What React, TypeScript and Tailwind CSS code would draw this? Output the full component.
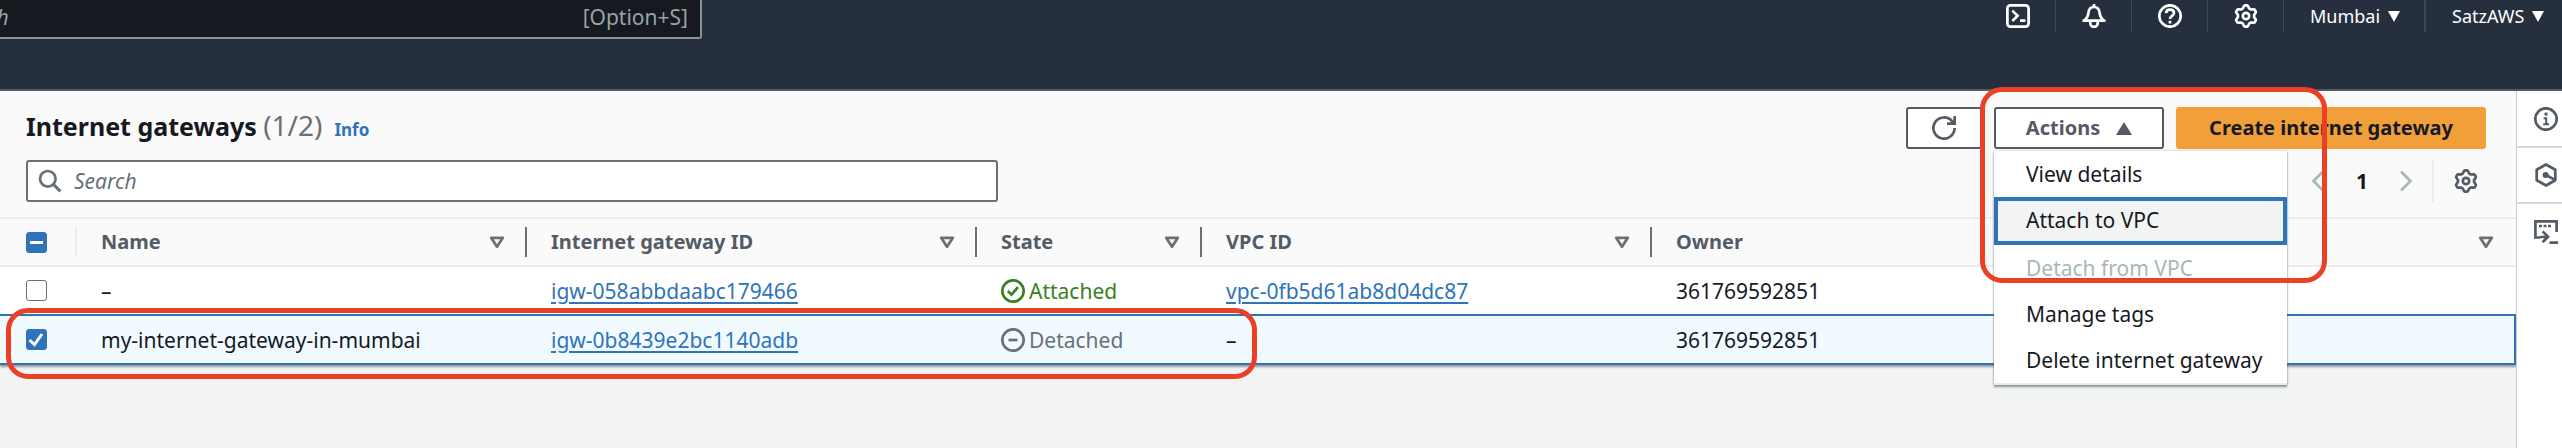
import React, { useState } from 'react';

type IconProps = { className?: string };

function Svg({ className = '', children }: IconProps & { children: React.ReactNode }) {
  return (
    <svg viewBox="0 0 24 24" fill="none" stroke="currentColor" strokeWidth="2.7" className={`block size-6 shrink-0 ${className}`} aria-hidden="true">
      {children}
    </svg>
  );
}

function gearPath(): string {
  const points: string[] = [];
  for (let i = 0; i < 144; i++) {
    const a = (i / 144) * Math.PI * 2;
    const wave = Math.max(-1, Math.min(1, 1.35 * Math.cos(6 * a)));
    const r = 9.4 + 1.3 * wave;
    points.push(`${(12 + r * Math.sin(a)).toFixed(2)} ${(12 - r * Math.cos(a)).toFixed(2)}`);
  }
  return `M${points.join('L')}Z`;
}

const GEAR = gearPath();

const GearIcon = () => (
  <Svg>
    <path d={GEAR} strokeLinejoin="round" />
    <circle cx="12" cy="12" r="3.2" />
  </Svg>
);

const ShellIcon = () => (
  <Svg>
    <rect x="1.4" y="1.4" width="21.2" height="21.2" rx="3" />
    <path d="M6.3 6.6 11.6 11.8 6.3 17M14 16.6h5.4" />
  </Svg>
);

const BellIcon = () => (
  <Svg>
    <path d="M12 0v3M0.5 16.6h23M2.6 16.4C5.4 13.8 6.2 12 6.4 9 6.7 5.4 8.6 3 12 3s5.3 2.4 5.6 6c.2 3 1 4.8 3.8 7.4" />
    <path d="M8.3 17v2.2a3.7 3.7 0 0 0 7.4 0V17" />
  </Svg>
);

const HelpIcon = () => (
  <Svg>
    <circle cx="12" cy="12" r="10.7" />
    <path d="M8 9.2C8.2 6.8 9.8 5.7 12 5.7c2.3 0 4 1.3 4 3.3 0 3-4 2.9-4 6.1M12 16.8v2.6" />
  </Svg>
);

const RefreshIcon = () => (
  <Svg>
    <path d="M22.6 12A10.6 10.6 0 1 1 20 5.1L22 7.6" />
    <path d="M15 7.7h7.7V0" />
  </Svg>
);

const SearchIcon = () => (
  <Svg>
    <circle cx="9.8" cy="9.8" r="7.8" />
    <path d="m15.4 15.4 7 7" strokeWidth="3" />
  </Svg>
);

const InfoIcon = () => (
  <Svg>
    <circle cx="12" cy="12" r="10.7" />
    <path d="M12 5.6v3" strokeWidth="3" />
    <path d="M9.6 11.2h2.6v6M9.2 17.3h5.8" strokeWidth="2" />
  </Svg>
);

const HexIcon = () => (
  <Svg>
    <path d="m12 1.5 9.3 5.2v10.6L12 22.5l-9.3-5.2V6.7Z" strokeLinejoin="round" />
    <circle cx="11.6" cy="12" r="3" fill="currentColor" stroke="none" />
    <path d="m12 12 8.5 4.6" />
  </Svg>
);

const ConsoleIcon = () => (
  <Svg>
    <path d="M6 17.5H1.4V1.4h21.2V12" />
    <path d="M5 6h3M9.5 6h3M14 6h3" />
    <path d="M6 17h7.5M8.6 11.4l5.4 5.4-5.4 5.4M15.5 22.6H24" />
  </Svg>
);

const CheckCircleIcon = () => (
  <Svg>
    <circle cx="12" cy="12" r="10.7" />
    <path d="m6.8 12 3.7 3.6 6.4-7.4" />
  </Svg>
);

const MinusCircleIcon = () => (
  <Svg>
    <circle cx="12" cy="12" r="10.7" />
    <path d="M7.5 12h9" />
  </Svg>
);

const ChevronIcon = ({ className = '' }: IconProps) => (
  <Svg className={className}>
    <path d="m7 2.5 9.5 9.5L7 21.5" />
  </Svg>
);

const FilterIcon = () => (
  <svg viewBox="0 0 16 13" className="block h-[13px] w-4 shrink-0" fill="none" stroke="currentColor" strokeWidth="2.8" aria-hidden="true">
    <path d="M2.2 1.8h11.6L8 10.7Z" strokeLinejoin="round" />
  </svg>
);

const CaretDown = () => (
  <svg viewBox="0 0 12 12" className="block size-3" fill="currentColor" aria-hidden="true">
    <path d="M0 1h12L6 12Z" />
  </svg>
);

function Checkbox({ label, state, onChange }: { label: string; state: 'on' | 'off' | 'mixed'; onChange: () => void }) {
  return (
    <label className="relative block size-[21px]">
      <input
        type="checkbox"
        aria-label={label}
        checked={state === 'on'}
        onChange={onChange}
        className={`block size-[21px] appearance-none rounded-[3px] border ${state === 'off' ? 'border-[#687078] bg-white' : 'border-[#2f73ba] bg-[#2f73ba]'}`}
      />
      {state !== 'off' && (
        <svg viewBox="0 0 21 21" fill="none" stroke="white" strokeWidth="3" className="pointer-events-none absolute inset-0" aria-hidden="true">
          <path d={state === 'on' ? 'M3.5 11 8.5 15.5 16 5' : 'M4 10.5h13'} />
        </svg>
      )}
    </label>
  );
}

function HeaderCell({ children, last = false }: { children: string; last?: boolean }) {
  return (
    <th scope="col" className="p-0 text-left">
      <div className={`flex h-[30px] items-center justify-between pl-6 ${last ? 'pr-[22px]' : 'border-r-2 border-[#687078] pr-5'}`}>
        {children}
        <button type="button" aria-label={`Sort by ${children}`} className="text-[#687078]">
          <FilterIcon />
        </button>
      </div>
    </th>
  );
}

const NAV_BUTTONS = [
  { label: 'CloudShell', icon: <ShellIcon /> },
  { label: 'Notifications', icon: <BellIcon /> },
  { label: 'Support', icon: <HelpIcon /> },
  { label: 'Settings', icon: <GearIcon /> },
];

const MENU = ['View details', 'Attach to VPC', 'Detach from VPC', 'Manage tags', 'Delete internet gateway'];

const ROWS = [
  { name: '–', id: 'igw-058abbdaabc179466', attached: true, vpc: 'vpc-0fb5d61ab8d04dc87', owner: '361769592851' },
  { name: 'my-internet-gateway-in-mumbai', id: 'igw-0b8439e2bc1140adb', attached: false, vpc: '', owner: '361769592851' },
];

const LINK = 'text-[#2f73ba] underline decoration-2 underline-offset-3';

export default function App() {
  const [selected, setSelected] = useState<number[]>([1]);
  const toggle = (i: number) => setSelected((s) => (s.includes(i) ? s.filter((x) => x !== i) : [...s, i]));
  const all = selected.length === 0 ? 'off' : selected.length === ROWS.length ? 'on' : 'mixed';

  return (
    <div className="relative flex min-h-screen flex-col overflow-hidden bg-[#f2f3f3] font-['Noto_Sans',sans-serif] text-[21px] leading-7 text-[#16191f]">
      <header className="flex h-[91px] items-start justify-between border-b-2 border-[#545b64] bg-[#262f3e] text-white">
        <div className="-ml-[94px] flex h-[39px] w-[796px] items-end rounded-b-[3px] border-2 border-t-0 border-[#879596] bg-[#16191f] pr-3 pb-1.5 text-[#95a5a6]">
          <input aria-label="Search services" placeholder="Search" className="h-7 min-w-0 flex-1 bg-transparent pl-[38px] italic outline-none placeholder:text-[#95a5a6]" />
          <span>[Option+S]</span>
        </div>
        <nav className="flex h-8 text-lg leading-6">
          {NAV_BUTTONS.map((b) => (
            <button key={b.label} type="button" aria-label={b.label} className="flex w-[76px] items-center justify-center border-r border-[#414750]">
              {b.icon}
            </button>
          ))}
          <button type="button" className="flex w-[142px] items-center gap-2 border-r-2 border-[#414750] pl-[26px]">
            Mumbai <CaretDown />
          </button>
          <button type="button" className="flex w-[136px] items-center gap-2 pl-[26px]">
            SatzAWS <CaretDown />
          </button>
        </nav>
      </header>

      <div className="flex flex-1">
        <main className="min-w-0 flex-1">
          <section className="bg-[#fafafa] shadow-[0_2px_2px_#545b6499]">
            <div className="flex items-start justify-between pt-4 pr-[30px] pl-[26px]">
              <div className="flex h-[42px] items-baseline">
                <h1 className="text-[25px] leading-9 font-bold">
                  Internet gateways <span className="text-[28px] font-normal text-[#687078]">(1/2)</span>
                </h1>
                <a href="#info" className="ml-3 text-[17px] font-bold text-[#2f73ba]">Info</a>
              </div>
              <div className="flex h-[42px] gap-3 text-xl font-bold">
                <button type="button" aria-label="Refresh" className="flex w-19 items-center justify-center rounded-[3px] border-2 border-[#545b64] bg-white text-[#545b64]">
                  <RefreshIcon />
                </button>
                <div className="relative">
                  <button type="button" aria-expanded="true" className="flex h-full w-[170px] items-center justify-center gap-4 rounded-[3px] border-2 border-[#545b64] bg-white text-[#545b64]">
                    Actions
                    <svg viewBox="0 0 16 13" className="h-[13px] w-4" fill="currentColor" aria-hidden="true">
                      <path d="M8 0 16 13H0Z" />
                    </svg>
                  </button>
                  <ul role="menu" className="absolute top-full left-0 z-10 mt-0.5 w-[293px] border-b-2 border-[#eaeded] bg-white text-[21px] font-normal shadow-[0_2px_2px_#545b6499,0_0_2px_#545b6466]">
                    {MENU.map((item, i) => (
                      <li key={item} role="none">
                        <button
                          type="button"
                          role="menuitem"
                          disabled={i === 2}
                          className={`block w-full text-left ${i === 1 ? 'h-12 border-4 border-[#2f73ba] bg-[#f2f3f3] pl-7' : 'h-[46px] pt-0.5 pl-8'} ${i === 2 ? 'text-[#aab7b8]' : ''}`}
                        >
                          {item}
                        </button>
                      </li>
                    ))}
                  </ul>
                </div>
                <button type="button" className="w-[310px] rounded-[3px] bg-[#f19f39]">Create internet gateway</button>
              </div>
            </div>

            <div className="flex items-center justify-between pt-[11px] pr-[38px] pb-[15px] pl-[26px]">
              <label className="flex h-[42px] w-[972px] items-center gap-3 rounded-[3px] border-2 border-[#687078] bg-white pl-2.5 text-[#687078]">
                <SearchIcon />
                <input aria-label="Search internet gateways" placeholder="Search" className="min-w-0 flex-1 bg-transparent italic outline-none placeholder:text-[#687078]" />
              </label>
              <div className="flex items-center text-[#aab7b8]">
                <button type="button" aria-label="Previous page"><ChevronIcon className="rotate-180" /></button>
                <button type="button" className="w-16 text-center font-bold text-[#16191f]">1</button>
                <button type="button" aria-label="Next page"><ChevronIcon /></button>
                <button type="button" aria-label="Preferences" className="ml-3.5 flex h-[42px] items-center border-l-2 border-[#eaeded] pl-5 text-[#545b64]">
                  <GearIcon />
                </button>
              </div>
            </div>

            <table className="w-full table-fixed border-collapse">
              <colgroup>
                <col className="w-[77px]" />
                <col className="w-[450px]" />
                <col className="w-[450px]" />
                <col className="w-[225px]" />
                <col className="w-[450px]" />
                <col />
              </colgroup>
              <thead className="text-xl text-[#545b64]">
                <tr className="h-12 border-y-2 border-[#eaeded]">
                  <th scope="col" className="p-0">
                    <div className="flex h-[30px] items-center border-r-2 border-[#eaeded] pl-[26px]">
                      <Checkbox label="Select all" state={all} onChange={() => setSelected(all === 'on' ? [] : ROWS.map((_, i) => i))} />
                    </div>
                  </th>
                  <HeaderCell>Name</HeaderCell>
                  <HeaderCell>Internet gateway ID</HeaderCell>
                  <HeaderCell>State</HeaderCell>
                  <HeaderCell>VPC ID</HeaderCell>
                  <HeaderCell last>Owner</HeaderCell>
                </tr>
              </thead>
              <tbody>
                {ROWS.map((r, i) => (
                  <tr key={r.id} className={`h-[49px] ${selected.includes(i) ? 'border-y-2 border-[#2f73ba] bg-[#f1faff] shadow-[inset_-2px_0_#2f73ba]' : 'bg-white'}`}>
                    <td className="p-0 pl-[26px]">
                      <Checkbox label={`Select ${r.id}`} state={selected.includes(i) ? 'on' : 'off'} onChange={() => toggle(i)} />
                    </td>
                    <td className="p-0 pl-6">{r.name}</td>
                    <td className="p-0 pl-6"><a href={`#${r.id}`} className={LINK}>{r.id}</a></td>
                    <td className="p-0 pl-6">
                      <span className={`flex items-center gap-1 ${r.attached ? 'text-[#3b8020]' : 'text-[#687078]'}`}>
                        {r.attached ? <CheckCircleIcon /> : <MinusCircleIcon />}
                        {r.attached ? 'Attached' : 'Detached'}
                      </span>
                    </td>
                    <td className="p-0 pl-6">{r.vpc ? <a href={`#${r.vpc}`} className={LINK}>{r.vpc}</a> : '–'}</td>
                    <td className="p-0 pl-6">{r.owner}</td>
                  </tr>
                ))}
              </tbody>
            </table>
          </section>
        </main>

        <aside className="z-0 w-[46px] border-l border-[#c9cfcf] bg-white pt-px text-[#545b64]">
          {[<InfoIcon />, <HexIcon />, <ConsoleIcon />].map((icon, i) => (
            <button key={i} type="button" aria-label={['Info panel', 'Diagnostics', 'Console tools'][i]} className={`flex h-14 w-full items-center pl-[17px] ${i < 2 ? 'border-b-2 border-[#d5dbdb]' : ''}`}>
              {icon}
            </button>
          ))}
        </aside>
      </div>

      <div className="pointer-events-none absolute top-[308px] left-1.5 z-20 h-[71px] w-[1251px] rounded-[22px] border-5 border-[#eb4026]" />
      <div className="pointer-events-none absolute top-[87px] right-[235px] z-20 h-[196px] w-[347px] rounded-[22px] border-5 border-[#eb4026]" />
    </div>
  );
}
